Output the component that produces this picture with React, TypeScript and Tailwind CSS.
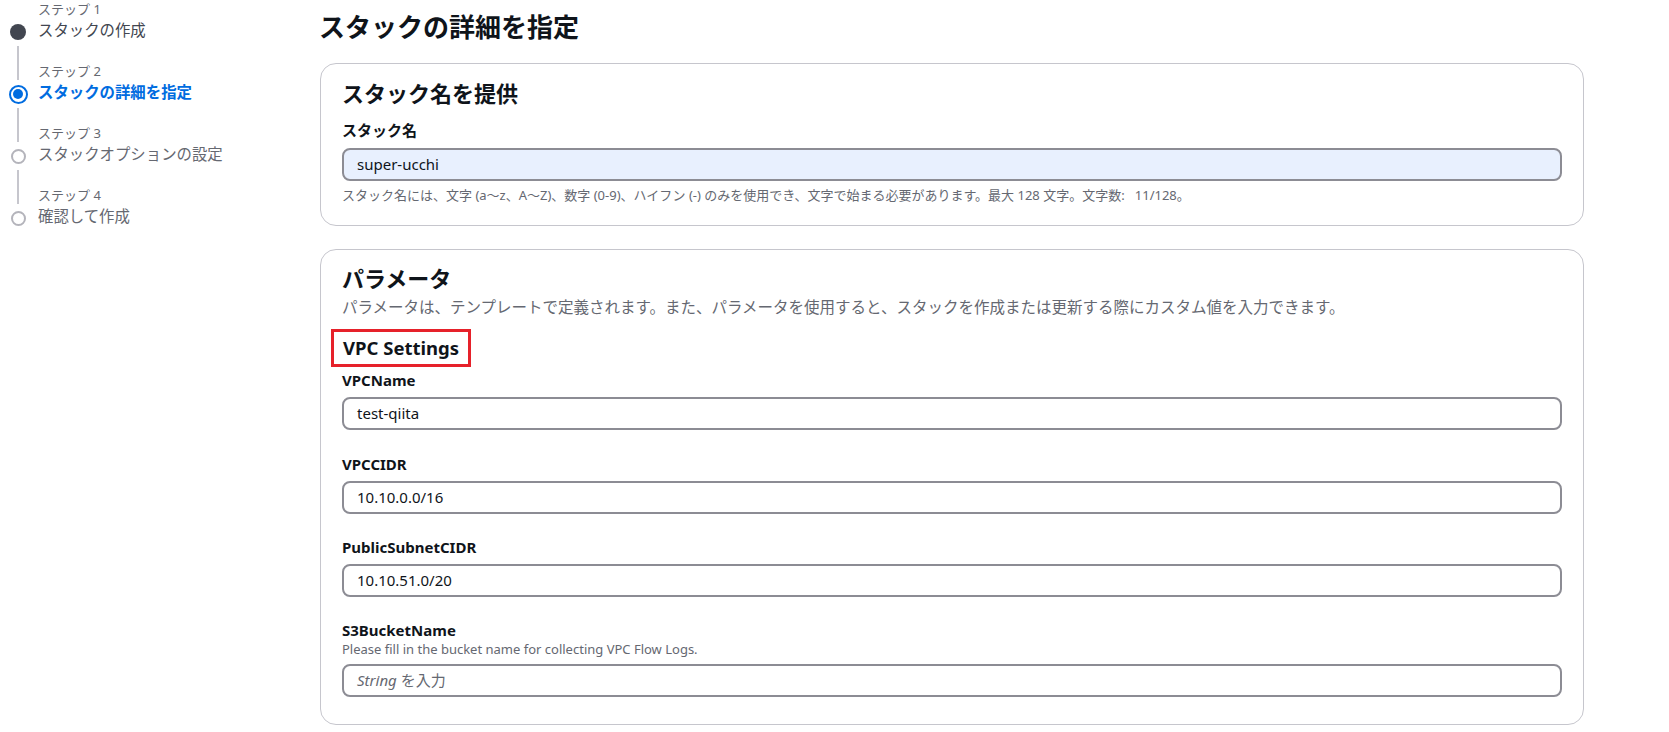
import React from "react";

const FONT = "font-['Noto_Sans','Noto_Sans_CJK_JP',sans-serif]";

type Step = { label: string; title: string; state: "done" | "active" | "todo" };

const steps: Step[] = [
  { label: "ステップ 1", title: "スタックの作成", state: "done" },
  { label: "ステップ 2", title: "スタックの詳細を指定", state: "active" },
  { label: "ステップ 3", title: "スタックオプションの設定", state: "todo" },
  { label: "ステップ 4", title: "確認して作成", state: "todo" },
];

function Circle({ state }: { state: Step["state"] }) {
  if (state === "done") return <div className="w-[16px] h-[16px] rounded-full bg-[#424650]" />;
  if (state === "active")
    return (
      <div className="w-[19px] h-[19px] rounded-full border-[2px] border-[#006ce0] flex items-center justify-center">
        <div className="w-[10px] h-[10px] rounded-full bg-[#006ce0]" />
      </div>
    );
  return <div className="w-[15px] h-[15px] rounded-full border-[2px] border-[#b4b4bb] bg-white" />;
}

function Sidebar() {
  return (
    <nav className="w-[320px] shrink-0">
      {steps.map((s, i) => (
        <div key={i} className="flex h-[62px]">
          <div className="w-[36px] flex flex-col items-center">
            <div className="h-[20px] w-full flex justify-center pb-[2px]">
              {i > 0 && <div className="w-[2px] h-full bg-[#c6c6cd]" />}
            </div>
            <div className="h-[24px] flex items-center justify-center">
              <Circle state={s.state} />
            </div>
            <div className="flex-1 w-full flex justify-center pt-[2px]">
              {i < steps.length - 1 && <div className="w-[2px] h-full bg-[#c6c6cd]" />}
            </div>
          </div>
          <div className="pl-[2px]">
            <div className="text-[13px] leading-[18px] text-[#656871]">{s.label}</div>
            <div
              className={
                "mt-[2px] text-[15.4px] leading-[22px] " +
                (s.state === "active"
                  ? "font-bold text-[#006ce0]"
                  : s.state === "done"
                  ? "text-[#424650]"
                  : "text-[#656871]")
              }
            >
              {s.title}
            </div>
          </div>
        </div>
      ))}
    </nav>
  );
}

function Input({ value, filled, className = "" }: { value?: string; filled?: boolean; className?: string }) {
  return (
    <div
      className={
        "h-[33px] rounded-[8px] border-[2px] border-[#8c8c94] flex items-center px-[13px] text-[15px] " +
        (filled ? "bg-[#e8f0fe] " : "bg-white ") +
        className
      }
    >
      {value ? (
        <span className="text-[#0f141a]">{value}</span>
      ) : (
        <span className="text-[#656871]">
          <span className="italic">String</span> を入力
        </span>
      )}
    </div>
  );
}

function Label({ children, className = "" }: { children: React.ReactNode; className?: string }) {
  return <div className={"text-[15px] leading-[20px] font-bold text-[#0f141a] " + className}>{children}</div>;
}

export default function App() {
  return (
    <div className={"w-[1669px] h-[732px] overflow-hidden bg-white flex " + FONT}>
      <Sidebar />
      <main className="w-[1264px] pt-[10px]">
        <h1 className="text-[26px] leading-[34px] font-bold text-[#0f141a] -ml-[1px]">スタックの詳細を指定</h1>

        <section className="mt-[19px] border border-[#c6c6cd] rounded-[16px] px-[21px] pt-[15px] pb-[21px]">
          <h2 className="text-[22px] leading-[28px] font-bold text-[#0f141a]">スタック名を提供</h2>
          <Label className="mt-[13px]">スタック名</Label>
          <Input value="super-ucchi" filled className="mt-[8px]" />
          <div className="mt-[5px] text-[13px] leading-[18px] text-[#656871]">
            スタック名には、文字 (a～z、A～Z)、数字 (0-9)、ハイフン (-) のみを使用でき、文字で始まる必要があります。最大 128 文字。文字数:&nbsp;&nbsp; 11/128。
          </div>
        </section>

        <section className="mt-[23px] border border-[#c6c6cd] rounded-[16px] px-[21px] pt-[14px] pb-[27px]">
          <h2 className="text-[22px] leading-[28px] font-bold text-[#0f141a]">パラメータ</h2>
          <p className="mt-[5px] text-[15.5px] leading-[20px] text-[#656871]">
            パラメータは、テンプレートで定義されます。また、パラメータを使用すると、スタックを作成または更新する際にカスタム値を入力できます。
          </p>
          <div className="mt-[12px] -ml-[11px] inline-block border-[3px] border-[#e6212a] h-[38px] px-[9px] text-[18.5px] leading-[32px] font-bold text-[#0f141a]">
            VPC Settings
          </div>
          <Label className="mt-[3px]">VPCName</Label>
          <Input value="test-qiita" className="mt-[7px]" />
          <Label className="mt-[24px]">VPCCIDR</Label>
          <Input value="10.10.0.0/16" className="mt-[7px]" />
          <Label className="mt-[23px]">PublicSubnetCIDR</Label>
          <Input value="10.10.51.0/20" className="mt-[7px]" />
          <Label className="mt-[23px]">S3BucketName</Label>
          <div className="text-[13px] leading-[18px] text-[#656871]">Please fill in the bucket name for collecting VPC Flow Logs.</div>
          <Input className="mt-[6px]" />
        </section>
      </main>
    </div>
  );
}
